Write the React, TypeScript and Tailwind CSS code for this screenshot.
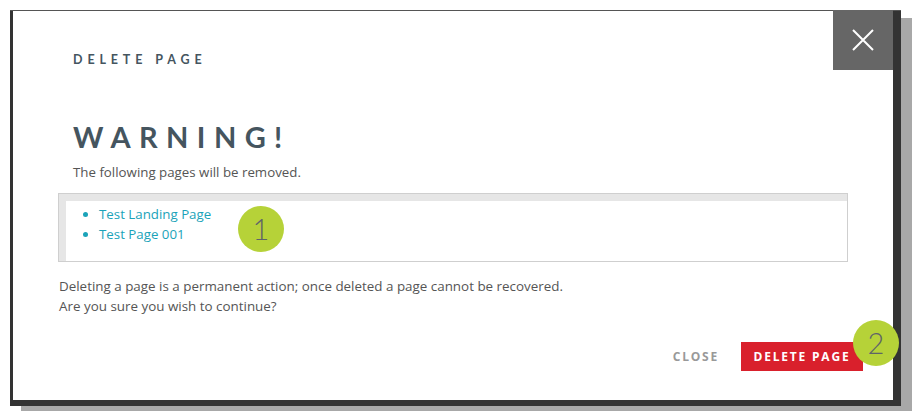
import React from 'react';

const pages = ['Test Landing Page', 'Test Page 001'];

const Marker: React.FC<{ n: number; className?: string }> = ({ n, className }) => (
    <div
        className={`flex h-[46px] w-[46px] items-center justify-center rounded-full bg-[#b6d238] font-['Lato',sans-serif] text-[29px] font-light text-[#5f6468] ${className || ''}`}
    >
        {n}
    </div>
);

const App: React.FC = () => {
    return (
        <div className="h-[411px] w-[921px] overflow-hidden bg-white font-['Open_Sans',sans-serif]">
            <div className="ml-[10px] mt-[10px] h-[396px] w-[891px] border-t border-[#555] bg-[#333] pb-[6px] pl-[3px] pr-[8px] shadow-[11px_8px_0_#a8a8a8]">
                <div className="relative h-full w-full bg-white pl-[45px] pr-[45px]">
                    {/* close button */}
                    <button className="absolute right-0 top-[-1px] flex h-[60px] w-[60px] items-center justify-center bg-[#666]">
                        <svg width="24" height="24" viewBox="0 0 24 24" fill="none" stroke="#fff" strokeWidth="2">
                            <path d="M2 2L22 22M22 2L2 22" />
                        </svg>
                    </button>

                    <div className="pl-[15px] pt-[41px] font-['Lato',sans-serif] text-[12.5px] font-bold leading-[16px] tracking-[0.39em] text-[#45555f]">
                        DELETE PAGE
                    </div>
                    <div className="mt-[52px] pl-[15px] font-['Lato',sans-serif] text-[29px] font-bold leading-[34px] tracking-[0.29em] text-[#45555f]">
                        WARNING!
                    </div>
                    <p className="mt-[9px] pl-[15px] text-[13.3px] leading-[18px] text-[#555]">
                        The following pages will be removed.
                    </p>

                    <div className="relative mt-[12px] h-[69px] w-[790px] border border-[#cfcfcf] pl-[27px] pt-[10px] shadow-[inset_7px_7px_0_#e6e6e6]">
                        <ul className="list-disc pl-[13px] text-[13.3px] leading-[20px] text-[#1ba3b9] marker:text-[#1ba3b9]">
                            {pages.map((p) => (
                                <li key={p}>{p}</li>
                            ))}
                        </ul>
                        <Marker n={1} className="absolute left-[179px] top-[12px]" />
                    </div>

                    <div className="mt-[14px] pl-px text-[13.4px] leading-[20px] text-[#555]">
                        <p>Deleting a page is a permanent action; once deleted a page cannot be recovered.</p>
                        <p>Are you sure you wish to continue?</p>
                    </div>

                    <div className="mt-[26px] flex items-center justify-end gap-[22px]">
                        <button className="text-[12px] font-bold tracking-[0.15em] text-[#999]">CLOSE</button>
                        <button className="mr-[-15px] h-[29px] w-[122px] bg-[#d9202c] text-[12px] font-bold tracking-[0.15em] text-white">
                            DELETE PAGE
                        </button>
                    </div>

                    <Marker n={2} className="absolute left-[840px] top-[309px]" />
                </div>
            </div>
        </div>
    );
};

export default App;
